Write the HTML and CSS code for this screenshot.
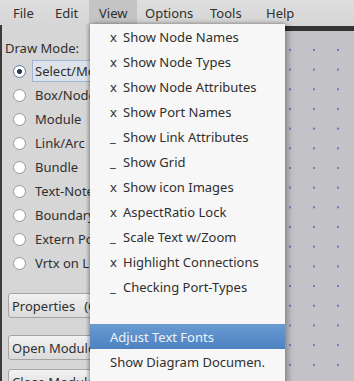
FILE: index.html
```html
<!DOCTYPE html>
<html lang="en">
  <head>
    <meta charset="UTF-8" />
    <title>Diagram Editor - View menu</title>
    <link rel="stylesheet" href="styles.css">
  </head>
  <body>
    <div class="menubar">
      <span class="menu-title file">File</span>
      <span class="menu-title edit">Edit</span>
      <span class="menu-title view active">View</span>
      <span class="menu-title options">Options</span>
      <span class="menu-title tools">Tools</span>
      <span class="menu-title help">Help</span>
    </div>

    <div class="main">
      <div class="sidebar">
        <div class="mode-label">Draw Mode:</div>
        <div class="radio-list">
          <div class="radio-row"><span class="radio checked"></span><span class="radio-text focus">Select/Move</span></div>
          <div class="radio-row"><span class="radio"></span><span class="radio-text">Box/Node</span></div>
          <div class="radio-row"><span class="radio"></span><span class="radio-text">Module</span></div>
          <div class="radio-row"><span class="radio"></span><span class="radio-text">Link/Arc</span></div>
          <div class="radio-row"><span class="radio"></span><span class="radio-text">Bundle</span></div>
          <div class="radio-row"><span class="radio"></span><span class="radio-text">Text-Note</span></div>
          <div class="radio-row"><span class="radio"></span><span class="radio-text">Boundary</span></div>
          <div class="radio-row"><span class="radio"></span><span class="radio-text">Extern Port</span></div>
          <div class="radio-row"><span class="radio"></span><span class="radio-text">Vrtx on Link</span></div>
        </div>
        <div class="btn-list">
          <button class="side-btn">Properties<span class="hint">(Ctrl)</span></button>
          <button class="side-btn">Open Module</button>
          <button class="side-btn last">Close Module</button>
        </div>
      </div>
      <div class="canvas-wrap">
        <div class="canvas-bar"></div>
        <div class="canvas"></div>
      </div>
    </div>

    <!-- dropdown of the View menu -->
    <div class="dropdown">
      <div class="item"><span class="mark">x</span>Show Node Names</div>
      <div class="item"><span class="mark">x</span>Show Node Types</div>
      <div class="item"><span class="mark">x</span>Show Node Attributes</div>
      <div class="item"><span class="mark">x</span>Show Port Names</div>
      <div class="item"><span class="mark">_</span>Show Link Attributes</div>
      <div class="item"><span class="mark">_</span>Show Grid</div>
      <div class="item"><span class="mark">x</span>Show icon Images</div>
      <div class="item"><span class="mark">x</span>AspectRatio Lock</div>
      <div class="item"><span class="mark">_</span>Scale Text w/Zoom</div>
      <div class="item"><span class="mark">x</span>Highlight Connections</div>
      <div class="item"><span class="mark">_</span>Checking Port-Types</div>
      <div class="spacer"></div>
      <div class="item selected">Adjust Text Fonts</div>
      <div class="item">Show Diagram Documen.</div>
    </div>
  </body>
</html>
```

FILE: styles.css
```css
body {
  margin: 0;
  width: 354px;
  height: 381px;
  overflow: hidden;
  font-family: "Noto Sans", "Open Sans", sans-serif;
  font-size: 13px;
  color: #2f2f2f;
  background-color: #d6d6d6;
  position: relative;
}

.menubar {
  height: 25px;
  display: flex;
  align-items: stretch;
  padding-left: 3px;
  background: linear-gradient(#dedede, #d6d6d6);
}

.menu-title {
  display: flex;
  align-items: center;
  padding-left: 10px;
  box-sizing: border-box;
}

/* breite der menuetitel */
.file { width: 42px; }
.edit { width: 44px; }
.view { width: 48px; }
.options { width: 63px; padding-left: 8px; }
.tools { width: 56px; }
.help { width: 50px; }

.menu-title.active {
  background-color: #c4c4c4;
}

.main {
  display: flex;
  height: 356px;
  border-left: 2px solid #3a3a3a;
}

.sidebar {
  width: 200px;
  flex-shrink: 0;
  padding: 14px 0 0 3px;
  box-sizing: border-box;
}

.mode-label {
  font-size: 13px;
  height: 20px;
}

.radio-list {
  padding-left: 8px;
}

.radio-row {
  display: flex;
  align-items: center;
  height: 24px;
}

.radio {
  width: 13px;
  height: 13px;
  border-radius: 50%;
  border: 1px solid #9c9c9c;
  background: radial-gradient(#ffffff 60%, #ececec);
  box-sizing: border-box;
  margin-right: 6px;
}

.radio.checked {
  border-color: #5d7ea8;
  background: radial-gradient(#2a3b52 0, #2a3b52 28%, #ffffff 34%, #ffffff 60%, #d8e2ee);
}

.radio-text {
  padding: 1px 2px;
  border: 1px solid transparent;
}

.radio-text.focus {
  border-color: #9db6d6;
  background-color: #dde2ea;
}

.btn-list {
  padding: 18px 0 0 3px;
  display: flex;
  flex-direction: column;
  gap: 17px;
}

.side-btn {
  width: 170px;
  height: 25px;
  text-align: left;
  font-family: inherit;
  font-size: 13px;
  color: #2f2f2f;
  padding: 0 3px;
  border: 1px solid #a4a4a4;
  border-radius: 3px;
  background: linear-gradient(#f2f2f2, #dadada);
}

.hint {
  margin-left: 9px;
}

.side-btn.last {
  margin-top: -8px;
}

.canvas-wrap {
  flex: 1;
  display: flex;
  flex-direction: column;
}

.canvas-bar {
  height: 5px;
  margin-top: 1px;
  background-color: #333;
}

.canvas {
  flex: 1;
  background-color: #c3c3c7;
  background-image: radial-gradient(0.9px 1.8px at 50% 50%, #7a70b8 60%, transparent 100%);
  background-size: 24px 19.7px;
  background-position: 4px 9px;
}

.dropdown {
  position: absolute;
  left: 90px;
  top: 24px;
  width: 195px;
  height: 370px;
  background-color: #f7f7f7;
  box-shadow: -2px 0 3px rgba(0, 0, 0, 0.25), 3px 0 6px rgba(0, 0, 0, 0.3);
}

.item {
  height: 25px;
  display: flex;
  align-items: center;
  padding-left: 20px;
  font-size: 13px;
  white-space: nowrap;
}

.mark {
  width: 13px;
}

.spacer {
  height: 25px;
}

.selected {
  color: #eef3fa;
  background: linear-gradient(#6a9bd1, #4d82c2);
}
```
